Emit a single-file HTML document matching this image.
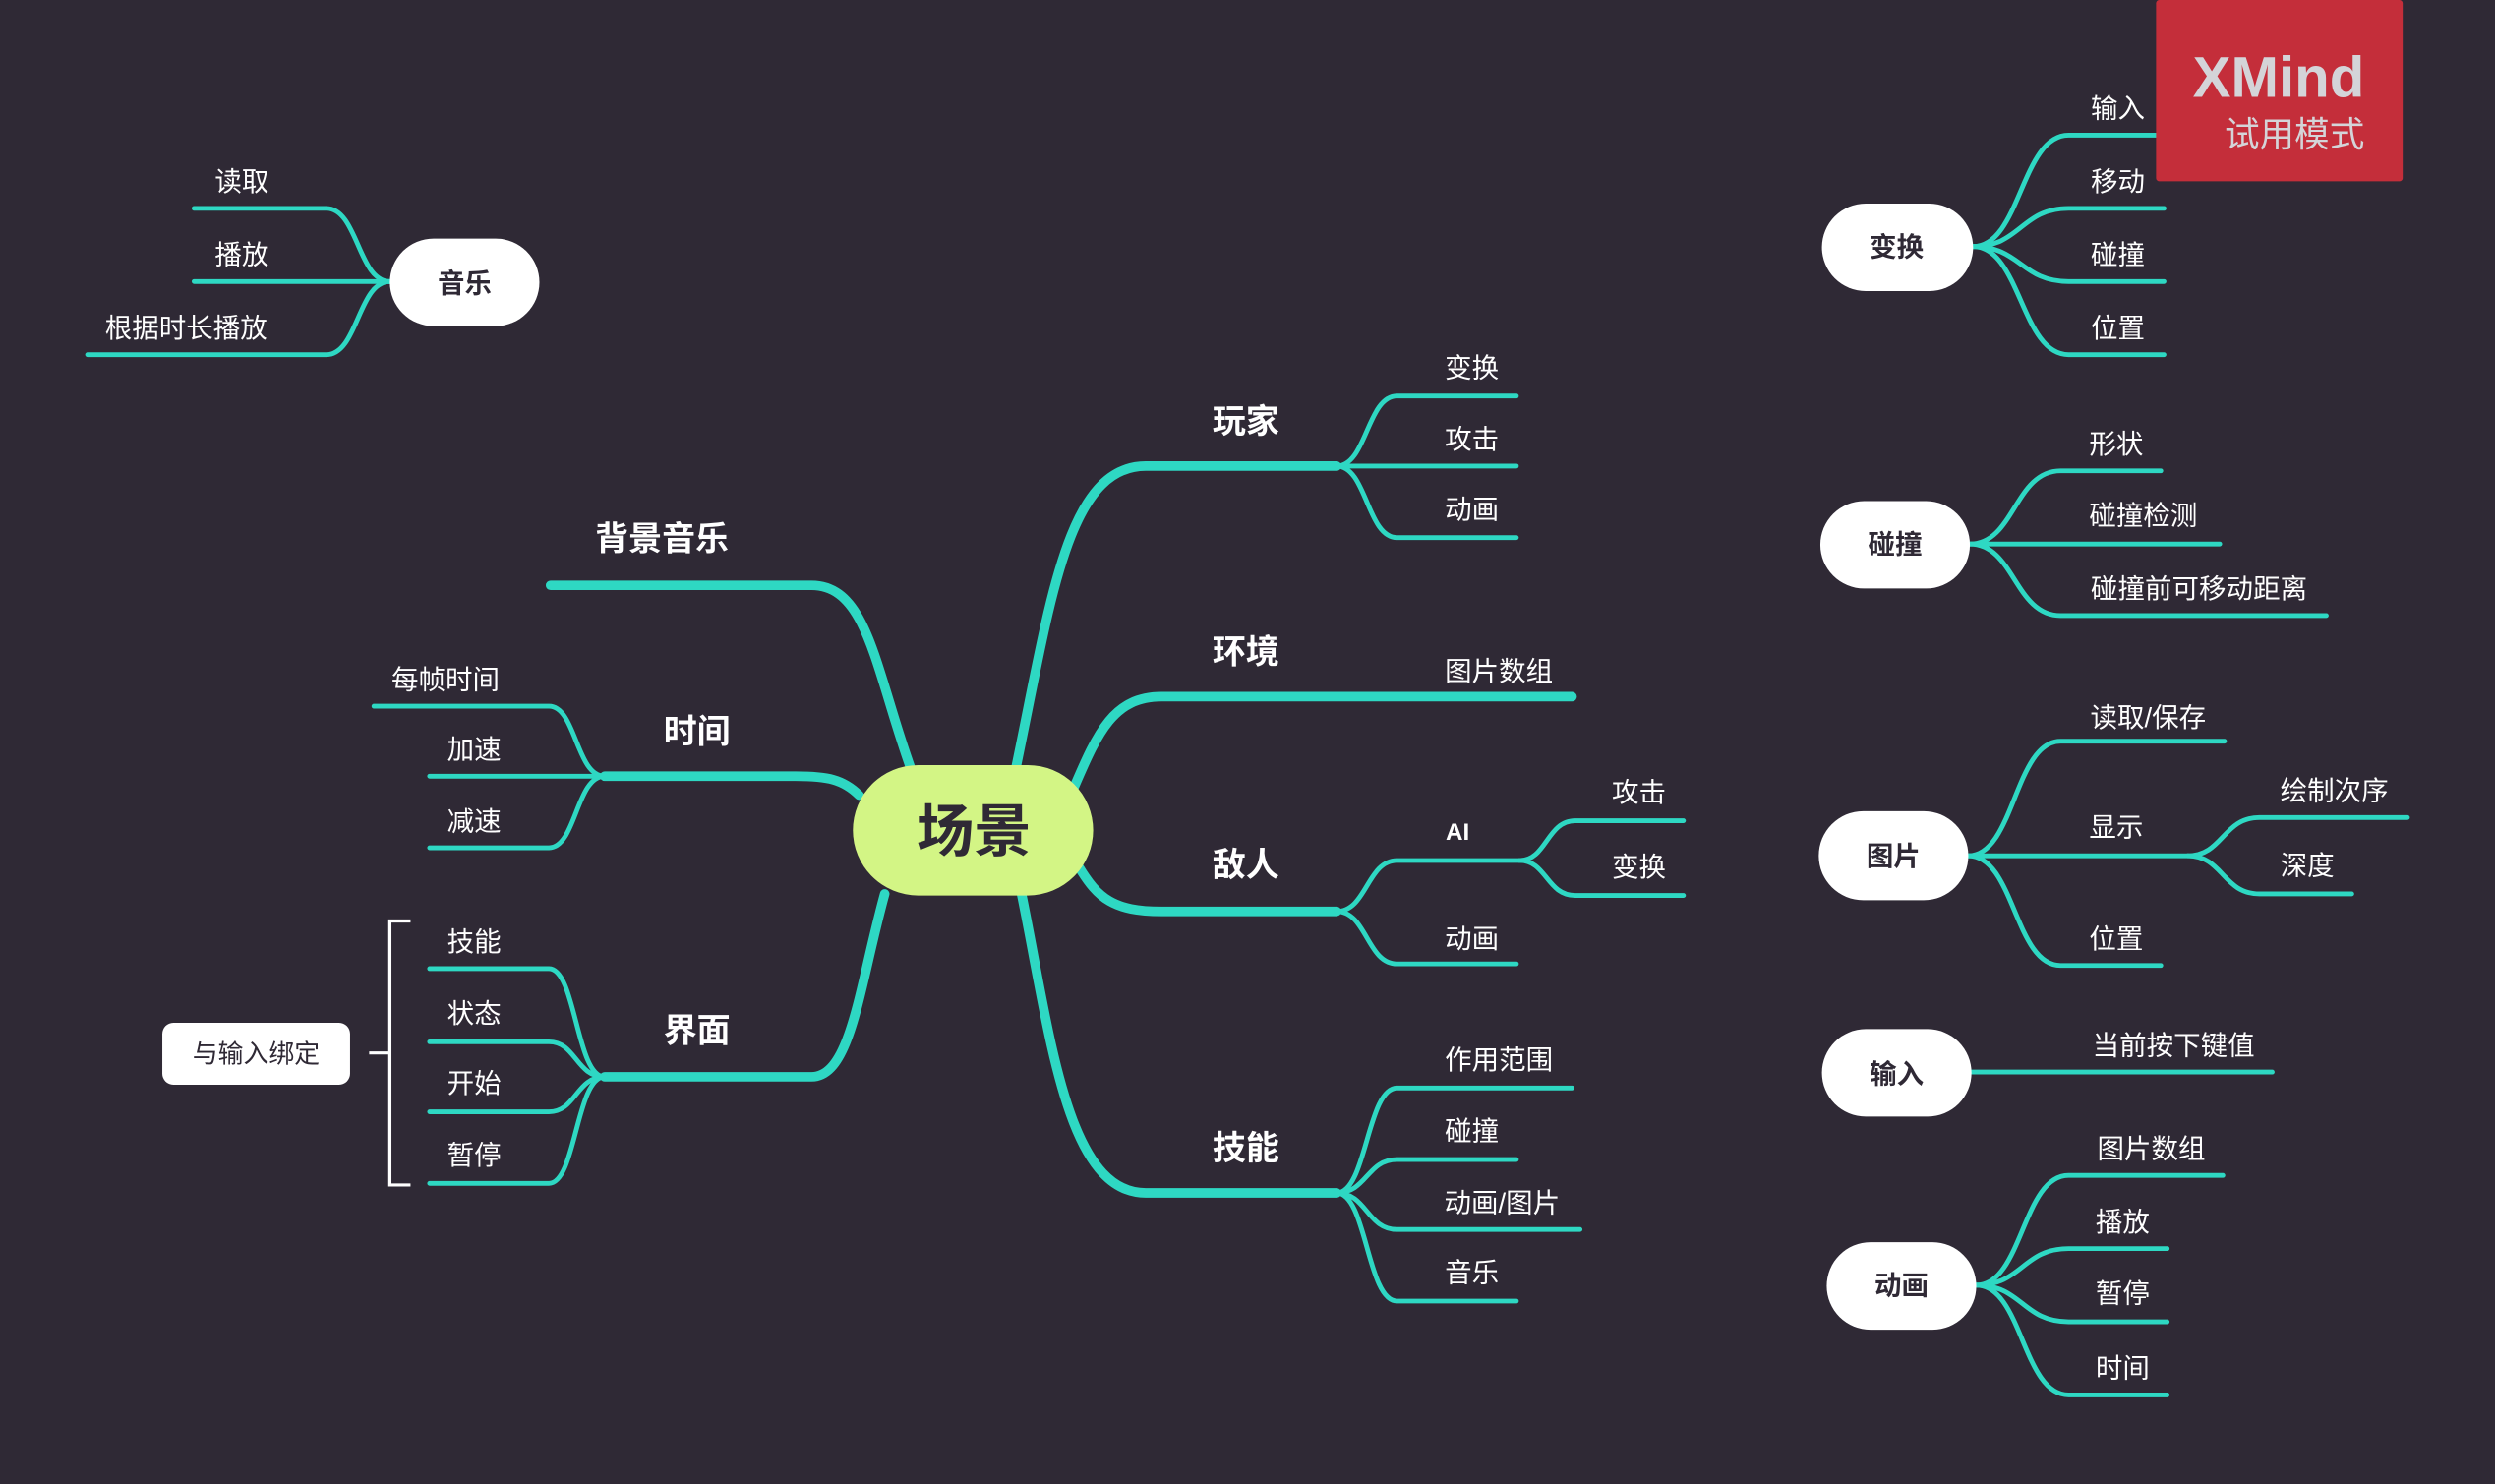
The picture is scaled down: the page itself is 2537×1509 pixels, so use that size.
<!DOCTYPE html>
<html><head><meta charset="utf-8"><style>
html,body{margin:0;padding:0;background:#2f2935;}
svg{display:block}
text{font-family:"Liberation Sans","Noto Sans CJK SC",sans-serif;}
.s{fill:none;stroke:#2ed8c3;stroke-width:3;stroke-linecap:round}
.m{fill:none;stroke:#2ed8c3;stroke-width:6;stroke-linecap:round}
.l{fill:#fff;font-size:17px;text-anchor:middle}
.b{fill:#fff;font-size:21px;font-weight:bold;text-anchor:middle}
.n{fill:#2f2935;font-size:17px;font-weight:bold;text-anchor:middle}
</style></head><body>
<svg width="2537" height="1509" viewBox="0 0 1568 933" preserveAspectRatio="none" xmlns="http://www.w3.org/2000/svg">
<rect width="1568" height="933" fill="#2f2935"/>
<!-- main branches -->
<path class="m" d="M638 485 C660 380 670 293 720 293 L840 293"/>
<path class="m" d="M675 495 C690 460 700 438 730 438 L988 438"/>
<path class="m" d="M678 545 C690 565 700 573 730 573 L840 573"/>
<path class="m" d="M642 562 C660 650 670 750 720 750 L840 750"/>
<path class="m" d="M572 482 C550 420 545 368 510 368 L346 368"/>
<path class="m" d="M540 500 C530 490 520 488 500 488 L380 488"/>
<path class="m" d="M556 562 C540 620 535 677 510 677 L380 677"/>
<!-- sub branches -->
<path class="s" d="M840 293 C859 293 859 249 878 249 L953 249"/>
<path class="s" d="M840 293 L953 293"/>
<path class="s" d="M840 293 C859 293 859 338 878 338 L953 338"/>
<path class="s" d="M840 573 C859 573 859 541 878 541 L955 541"/>
<path class="s" d="M840 573 C859 573 859 606 878 606 L953 606"/>
<path class="s" d="M955 541 C972 541 972 516 990 516 L1058 516"/>
<path class="s" d="M955 541 C972 541 972 563 990 563 L1058 563"/>
<path class="s" d="M840 750 C859 750 859 684 878 684 L988 684"/>
<path class="s" d="M840 750 C859 750 859 729 878 729 L953 729"/>
<path class="s" d="M840 750 C859 750 859 773 878 773 L993 773"/>
<path class="s" d="M840 750 C859 750 859 818 878 818 L953 818"/>
<path class="s" d="M380 488 C362 488 362 444 345 444 L235 444"/>
<path class="s" d="M380 488 L270 488"/>
<path class="s" d="M380 488 C362 488 362 533 345 533 L270 533"/>
<path class="s" d="M380 677 C362 677 362 609 345 609 L270 609"/>
<path class="s" d="M380 677 C362 677 362 655 345 655 L270 655"/>
<path class="s" d="M380 677 C362 677 362 699 345 699 L270 699"/>
<path class="s" d="M380 677 C362 677 362 744 345 744 L270 744"/>
<path class="s" d="M245 177 C225 177 225 131 205 131 L122 131"/>
<path class="s" d="M245 177 L122 177"/>
<path class="s" d="M245 177 C225 177 225 223 205 223 L55 223"/>
<path class="s" d="M1240 155 C1270 155 1270 85 1300 85 L1360 85"/>
<path class="s" d="M1240 155 C1270 155 1270 131 1300 131 L1360 131"/>
<path class="s" d="M1240 155 C1270 155 1270 177 1300 177 L1360 177"/>
<path class="s" d="M1240 155 C1270 155 1270 223 1300 223 L1360 223"/>
<path class="s" d="M1238 342 C1266 342 1266 296 1295 296 L1358 296"/>
<path class="s" d="M1238 342 L1395 342"/>
<path class="s" d="M1238 342 C1266 342 1266 387 1295 387 L1462 387"/>
<path class="s" d="M1237 538 C1266 538 1266 466 1295 466 L1398 466"/>
<path class="s" d="M1237 538 L1375 538"/>
<path class="s" d="M1237 538 C1266 538 1266 607 1295 607 L1358 607"/>
<path class="s" d="M1375 538 C1397 538 1397 514 1420 514 L1513 514"/>
<path class="s" d="M1375 538 C1397 538 1397 562 1420 562 L1478 562"/>
<path class="s" d="M1239 674 L1428 674"/>
<path class="s" d="M1242 808 C1271 808 1271 739 1300 739 L1397 739"/>
<path class="s" d="M1242 808 C1271 808 1271 785 1300 785 L1362 785"/>
<path class="s" d="M1242 808 C1271 808 1271 831 1300 831 L1362 831"/>
<path class="s" d="M1242 808 C1271 808 1271 877 1300 877 L1362 877"/>
<!-- bracket -->
<path d="M258 579 L245 579 L245 745 L258 745 M245 662 L232 662" fill="none" stroke="#fff" stroke-width="2"/>
<!-- central -->
<rect x="536" y="481" width="151" height="82" rx="41" fill="#d3f585"/>
<text x="612" y="535" style="fill:#2f2935;font-size:36px;font-weight:bold;text-anchor:middle">场景</text>
<!-- floating nodes -->
<rect x="245" y="150" width="94" height="55" rx="27.5" fill="#fff"/><text class="n" x="292" y="184">音乐</text>
<rect x="1145" y="128" width="95" height="55" rx="27.5" fill="#fff"/><text class="n" x="1192" y="161">变换</text>
<rect x="1144" y="315" width="94" height="55" rx="27.5" fill="#fff"/><text class="n" x="1191" y="348">碰撞</text>
<rect x="1143" y="510" width="94" height="56" rx="28" fill="#fff"/><text class="n" x="1190" y="544">图片</text>
<rect x="1145" y="647" width="94" height="55" rx="27.5" fill="#fff"/><text class="n" x="1192" y="681">输入</text>
<rect x="1148" y="781" width="94" height="55" rx="27.5" fill="#fff"/><text class="n" x="1195" y="814">动画</text>
<rect x="102" y="643" width="118" height="39" rx="7" fill="#fff"/><text x="161" y="668" style="fill:#2f2935;font-size:16px;text-anchor:middle">与输入绑定</text>
<!-- main labels -->
<text class="b" x="783" y="272">玩家</text>
<text class="b" x="783" y="417">环境</text>
<text class="b" x="783" y="551">敌人</text>
<text class="b" x="783" y="729">技能</text>
<text class="b" x="416" y="346">背景音乐</text>
<text class="b" x="438" y="467">时间</text>
<text class="b" x="438" y="655">界面</text>
<!-- sub labels -->
<text class="l" x="925" y="237">变换</text>
<text class="l" x="925" y="282">攻击</text>
<text class="l" x="925" y="326">动画</text>
<text class="l" x="942" y="428">图片数组</text>
<text x="916" y="528" style="fill:#fff;font-size:15px;font-weight:bold;text-anchor:middle">AI</text>
<text class="l" x="925" y="596">动画</text>
<text class="l" x="1030" y="504">攻击</text>
<text class="l" x="1030" y="551">变换</text>
<text class="l" x="942" y="672">作用范围</text>
<text class="l" x="925" y="717">碰撞</text>
<text class="l" x="944" y="762">动画/图片</text>
<text class="l" x="925" y="806">音乐</text>
<text class="l" x="280" y="433">每帧时间</text>
<text class="l" x="298" y="477">加速</text>
<text class="l" x="298" y="522">减速</text>
<text class="l" x="298" y="598">技能</text>
<text class="l" x="298" y="643">状态</text>
<text class="l" x="298" y="687">开始</text>
<text class="l" x="298" y="732">暂停</text>
<text class="l" x="152" y="120">读取</text>
<text class="l" x="152" y="166">播放</text>
<text class="l" x="117" y="212">根据时长播放</text>
<text class="l" x="1331" y="74">输入</text>
<text class="l" x="1331" y="120">移动</text>
<text class="l" x="1331" y="166">碰撞</text>
<text class="l" x="1331" y="212">位置</text>
<text class="l" x="1330" y="285">形状</text>
<text class="l" x="1347" y="330">碰撞检测</text>
<text class="l" x="1382" y="376">碰撞前可移动距离</text>
<text class="l" x="1350" y="457">读取/保存</text>
<text class="l" x="1330" y="526">显示</text>
<text class="l" x="1330" y="596">位置</text>
<text class="l" x="1467" y="503">绘制次序</text>
<text class="l" x="1450" y="550">深度</text>
<text class="l" x="1366" y="663">当前按下键值</text>
<text class="l" x="1352" y="728">图片数组</text>
<text class="l" x="1334" y="774">播放</text>
<text class="l" x="1334" y="819">暂停</text>
<text class="l" x="1334" y="866">时间</text>
<!-- watermark -->
<rect x="1355" y="0" width="155" height="114" rx="2" fill="#c42e3a"/>
<text x="1432" y="61" style="fill:#d4d4d8;font-size:36px;font-weight:bold;text-anchor:middle">XMind</text>
<text x="1442" y="92" style="fill:#d4d4d8;font-size:22px;text-anchor:middle">试用模式</text>
</svg>
</body></html>
